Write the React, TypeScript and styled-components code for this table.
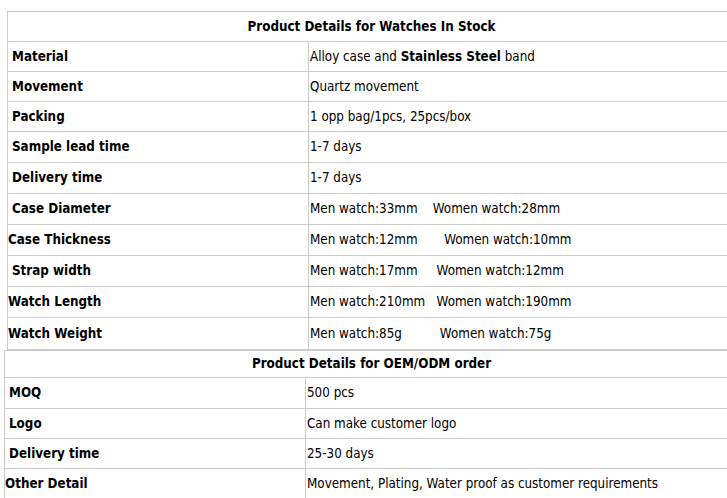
import React from "react";
import styled, { createGlobalStyle } from "styled-components";

const Global = createGlobalStyle`
  html, body { margin: 0; padding: 0; background: #fff; }
  body { overflow: hidden; }
`;

const Page = styled.div`
  width: 727px;
  height: 498px;
  overflow: hidden;
  padding-top: 11px;
  box-sizing: border-box;
  font-family: "DejaVu Sans Condensed", "DejaVu Sans", sans-serif;
  font-stretch: condensed;
  font-size: 13.3px;
  color: #000;
`;

const Table = styled.table<{ $left: number; $width: number }>`
  border-collapse: collapse;
  margin-left: ${(p) => p.$left}px;
  width: ${(p) => p.$width}px;
  table-layout: fixed;
`;

const Row = styled.tr<{ $h: number }>`
  & > td {
    height: ${(p) => p.$h - 1}px;
    line-height: ${(p) => p.$h - 1}px;
  }
`;

const Cell = styled.td`
  border: 1px solid #cccccc;
  padding: 0 1px;
  white-space: pre;
  vertical-align: middle;
  overflow: hidden;
`;

const HeadCell = styled(Cell)`
  text-align: center;
  font-weight: bold;
`;

const Label = styled(Cell)<{ $indent?: boolean }>`
  font-weight: bold;
  width: 300px;
  padding-left: ${(p) => (p.$indent ? 4 : 0)}px;
`;

const Value = styled(Cell)``;

const Strong = styled.b`
  font-weight: bold;
`;

type R = { label: string; value: React.ReactNode; h: number; indent?: boolean };

const stock: R[] = [
  { label: "Material", value: <>Alloy case and <Strong>Stainless Steel</Strong> band</>, h: 30, indent: true },
  { label: "Movement", value: "Quartz movement", h: 30, indent: true },
  { label: "Packing", value: "1 opp bag/1pcs, 25pcs/box", h: 30, indent: true },
  { label: "Sample lead time", value: "1-7 days", h: 31, indent: true },
  { label: "Delivery time", value: "1-7 days", h: 31, indent: true },
  { label: "Case Diameter", value: "Men watch:33mm    Women watch:28mm", h: 31, indent: true },
  { label: "Case Thickness", value: "Men watch:12mm       Women watch:10mm", h: 31 },
  { label: "Strap width", value: "Men watch:17mm     Women watch:12mm", h: 31, indent: true },
  { label: "Watch Length", value: "Men watch:210mm   Women watch:190mm", h: 31 },
  { label: "Watch Weight", value: "Men watch:85g          Women watch:75g", h: 32 },
];

const oem: R[] = [
  { label: "MOQ", value: "500 pcs", h: 31, indent: true },
  { label: "Logo", value: "Can make customer logo", h: 30, indent: true },
  { label: "Delivery time", value: "25-30 days", h: 30, indent: true },
  { label: "Other Detail", value: "Movement, Plating, Water proof as customer requirements", h: 31 },
];

function DetailTable({ title, rows, left, width, headH }: { title: string; rows: R[]; left: number; width: number; headH: number }) {
  return (
    <Table $left={left} $width={width}>
      <colgroup>
        <col style={{ width: 301 }} />
        <col />
      </colgroup>
      <tbody>
        <Row $h={headH}>
          <HeadCell colSpan={2}>{title}</HeadCell>
        </Row>
        {rows.map((r) => (
          <Row $h={r.h} key={r.label}>
            <Label $indent={r.indent}>{r.label}</Label>
            <Value>{r.value}</Value>
          </Row>
        ))}
      </tbody>
    </Table>
  );
}

export default function App() {
  return (
    <Page>
      <Global />
      <DetailTable title="Product Details for Watches In Stock" rows={stock} left={7} width={729} headH={30} />
      <DetailTable title="Product Details for OEM/ODM order" rows={oem} left={4} width={735} headH={27} />
    </Page>
  );
}
